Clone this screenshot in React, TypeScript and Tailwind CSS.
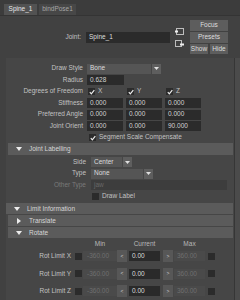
import React from 'react';

type Kids = { children?: React.ReactNode };

const Tri = ({ dir = 'down' }: { dir?: 'down' | 'right' }) =>
  dir === 'down' ? (
    <svg width="6" height="4" viewBox="0 0 6 4">
      <path d="M0 0H6L3 4Z" fill="#ececec" />
    </svg>
  ) : (
    <svg width="4" height="6" viewBox="0 0 4 6">
      <path d="M0 0L4 3L0 6Z" fill="#ececec" />
    </svg>
  );

const Arrow = () => (
  <svg width="5" height="3" viewBox="0 0 5 3">
    <path d="M0 0H5L2.5 3Z" fill="#e0e0e0" />
  </svg>
);

const Check = ({ on, label }: { on?: boolean; label?: string }) => (
  <div className="flex items-center gap-[3px]">
    <div className="w-[7px] h-[7px] bg-[#2b2b2b] flex items-center justify-center">
      {on && (
        <svg width="6" height="6" viewBox="0 0 6 6">
          <path d="M0.8 3.2L2.3 4.8L5.3 1.1" stroke="#ededed" strokeWidth="1.2" fill="none" />
        </svg>
      )}
    </div>
    {label && <span>{label}</span>}
  </div>
);

const Num = ({ v }: { v: string }) => (
  <div className="w-[36px] h-[10px] bg-[#2b2b2b] flex items-center pl-[3px] text-[#d2d2d2]">{v}</div>
);

const Drop = ({ value, body }: { value: string; body: string }) => (
  <div className="flex h-[10px] gap-[1px]">
    <div className={`${body} bg-[#555] flex items-center pl-[3px] text-[#dcdcdc]`}>{value}</div>
    <div className="w-[9px] bg-[#5e5e5e] flex items-center justify-center">
      <Arrow />
    </div>
  </div>
);

// label column: "narrow" lines up with Joint attributes, "wide" with Joint Labelling
const Row = ({ label, wide, dim, children }: Kids & { label: string; wide?: boolean; dim?: boolean }) => (
  <div className="h-[11.5px] flex items-center">
    <span
      className={`${wide ? 'w-[85px] pr-[5px]' : 'w-[81px] pr-[4px]'} shrink-0 text-right ${dim ? 'text-[#7a7a7a]' : ''}`}
    >
      {label}
    </span>
    {children}
  </div>
);

const Header = ({ title, open = true, inset = true, h = 'h-[11px]' }: { title: string; open?: boolean; inset?: boolean; h?: string }) => (
  <div className={`${h} ${inset ? 'ml-[2px]' : ''} mr-[1px] bg-[#5b5b5b] flex items-center text-[#d6d6d6]`}>
    <div className="w-[21px] flex justify-center">
      <Tri dir={open ? 'down' : 'right'} />
    </div>
    <span>{title}</span>
  </div>
);

const Btn = ({ label, cls }: { label: string; cls: string }) => (
  <div className={`${cls} bg-[#5d5d5d] flex items-center justify-center text-[#dedede]`}>{label}</div>
);

const Grey = ({ v }: { v: string }) => (
  <div className="w-[34px] h-[10px] bg-[#4a4a4a] flex items-center pl-[4px] text-[#6f6f6f]">{v}</div>
);

const RotRow = ({ axis }: { axis: string }) => (
  <div className="h-[17.5px] flex items-center">
    <span className="w-[69px] pr-[4px] shrink-0 text-right">Rot Limit {axis}</span>
    <Check />
    <div className="ml-[1px]">
      <Grey v="-360.00" />
    </div>
    <div className="w-[10px] h-[12px] bg-[#575757] flex items-center justify-center text-[#cfcfcf] text-[5px]">&lt;</div>
    <div className="ml-[2px] w-[31px] h-[10px] bg-[#2a2a2a] flex items-center pl-[3px] text-[#dadada]">0.00</div>
    <div className="ml-[3px] w-[10px] h-[12px] bg-[#575757] flex items-center justify-center text-[#cfcfcf] text-[5px]">&gt;</div>
    <div className="ml-[1px] w-[31px] h-[10px] bg-[#4a4a4a] flex items-center pl-[3px] text-[#6f6f6f]">360.00</div>
    <div className="ml-[3px]">
      <Check />
    </div>
  </div>
);

export default function App() {
  return (
    <div className="w-[240px] h-[300px] overflow-hidden bg-[#414141] font-['Liberation_Sans',Arial,sans-serif] text-[6.5px] leading-none text-[#c2c2c2] flex flex-col">
      {/* tabs */}
      <div className="h-[16px] shrink-0 flex items-end gap-[2px] pl-[4px] bg-[#3c3c3c] border-b border-[#343434]">
        <div className="h-[11px] w-[33px] bg-[#525252] flex items-center justify-center text-[#e8e8e8]">Spine_1</div>
        <div className="h-[11px] w-[37px] bg-[#474747] flex items-center justify-center text-[#a6a6a6]">bindPose1</div>
      </div>

      {/* node name + focus/presets */}
      <div className="h-[42px] shrink-0 flex items-center">
        <span className="w-[81px] text-right">Joint:</span>
        <div className="ml-[5px] w-[84px] h-[11px] bg-[#2b2b2b] flex items-center pl-[3px] text-[#dedede]">Spine_1</div>
        <div className="ml-[5px] w-[9px] flex flex-col gap-[5px]">
          <svg width="9" height="7" viewBox="0 0 9 7">
            <rect x="1.5" y="0.5" width="7" height="6" fill="none" stroke="#bdbdbd" />
            <rect x="0" y="2.5" width="3" height="2" fill="#f0f0f0" />
          </svg>
          <svg width="9" height="7" viewBox="0 0 9 7">
            <rect x="0.5" y="0.5" width="6" height="6" fill="none" stroke="#bdbdbd" />
            <rect x="5" y="3.5" width="4" height="2" fill="#f0f0f0" />
          </svg>
        </div>
        <div className="ml-[6px] w-[38px] flex flex-col gap-[1px]">
          <Btn label="Focus" cls="h-[11px]" />
          <Btn label="Presets" cls="h-[11px]" />
          <div className="flex gap-[2px]">
            <Btn label="Show" cls="h-[10px] w-[18px]" />
            <Btn label="Hide" cls="h-[10px] w-[18px]" />
          </div>
        </div>
      </div>

      {/* scrolled attribute area */}
      <div className="flex-1 flex min-h-0">
        <div className="w-[6px] shrink-0" />
        <div className="flex-1 bg-[#464646] flex flex-col pt-[5px]">
          <Row label="Draw Style">
            <Drop value="Bone" body="w-[64px]" />
          </Row>
          <Row label="Radius">
            <div className="w-[37px] h-[10px] bg-[#2b2b2b] flex items-center pl-[3px] text-[#d2d2d2]">0.628</div>
          </Row>
          <Row label="Degrees of Freedom">
            <div className="flex gap-[3px]">
              <div className="w-[36px] pl-[1px]"><Check on label="X" /></div>
              <div className="w-[36px] pl-[1px]"><Check on label="Y" /></div>
              <div className="w-[36px] pl-[1px]"><Check on label="Z" /></div>
            </div>
          </Row>
          <Row label="Stiffness">
            <div className="flex gap-[3px]"><Num v="0.000" /><Num v="0.000" /><Num v="0.000" /></div>
          </Row>
          <Row label="Preferred Angle">
            <div className="flex gap-[3px]"><Num v="0.000" /><Num v="0.000" /><Num v="0.000" /></div>
          </Row>
          <Row label="Joint Orient">
            <div className="flex gap-[3px]"><Num v="0.000" /><Num v="0.000" /><Num v="90.000" /></div>
          </Row>
          <Row label="">
            <div className="pl-[2px]"><Check on label="Segment Scale Compensate" /></div>
          </Row>

          <Header title="Joint Labelling" h="h-[12px]" />
          <div className="pt-[1px]">
            <Row label="Side" wide>
              <Drop value="Center" body="w-[31px]" />
            </Row>
            <Row label="Type" wide>
              <Drop value="None" body="w-[52px]" />
            </Row>
            <Row label="Other Type" wide dim>
              <div className="w-[136px] h-[10px] bg-[#3d3d3d] flex items-center pl-[3px] text-[#686868]">jaw</div>
            </Row>
            <Row label="" wide>
              <div className="pl-[1px]"><Check label="Draw Label" /></div>
            </Row>
          </div>

          <div className="mt-[1px]"><Header title="Limit Information" inset={false} /></div>
          <div className="mt-[1px]"><Header title="Translate" open={false} /></div>
          <div className="mt-[1px]"><Header title="Rotate" /></div>

          <div className="h-[9.5px] flex items-end text-[#b8b8b8]">
            <div className="w-[77px] shrink-0" />
            <div className="w-[34px] text-center">Min</div>
            <div className="w-[12px]" />
            <div className="w-[31px] text-center">Current</div>
            <div className="w-[14px]" />
            <div className="w-[31px] text-center">Max</div>
          </div>
          <RotRow axis="X" />
          <RotRow axis="Y" />
          <RotRow axis="Z" />
        </div>
        <div className="w-[6px] shrink-0 bg-[#4b4b4b] border-l border-[#363636]" />
      </div>
    </div>
  );
}
